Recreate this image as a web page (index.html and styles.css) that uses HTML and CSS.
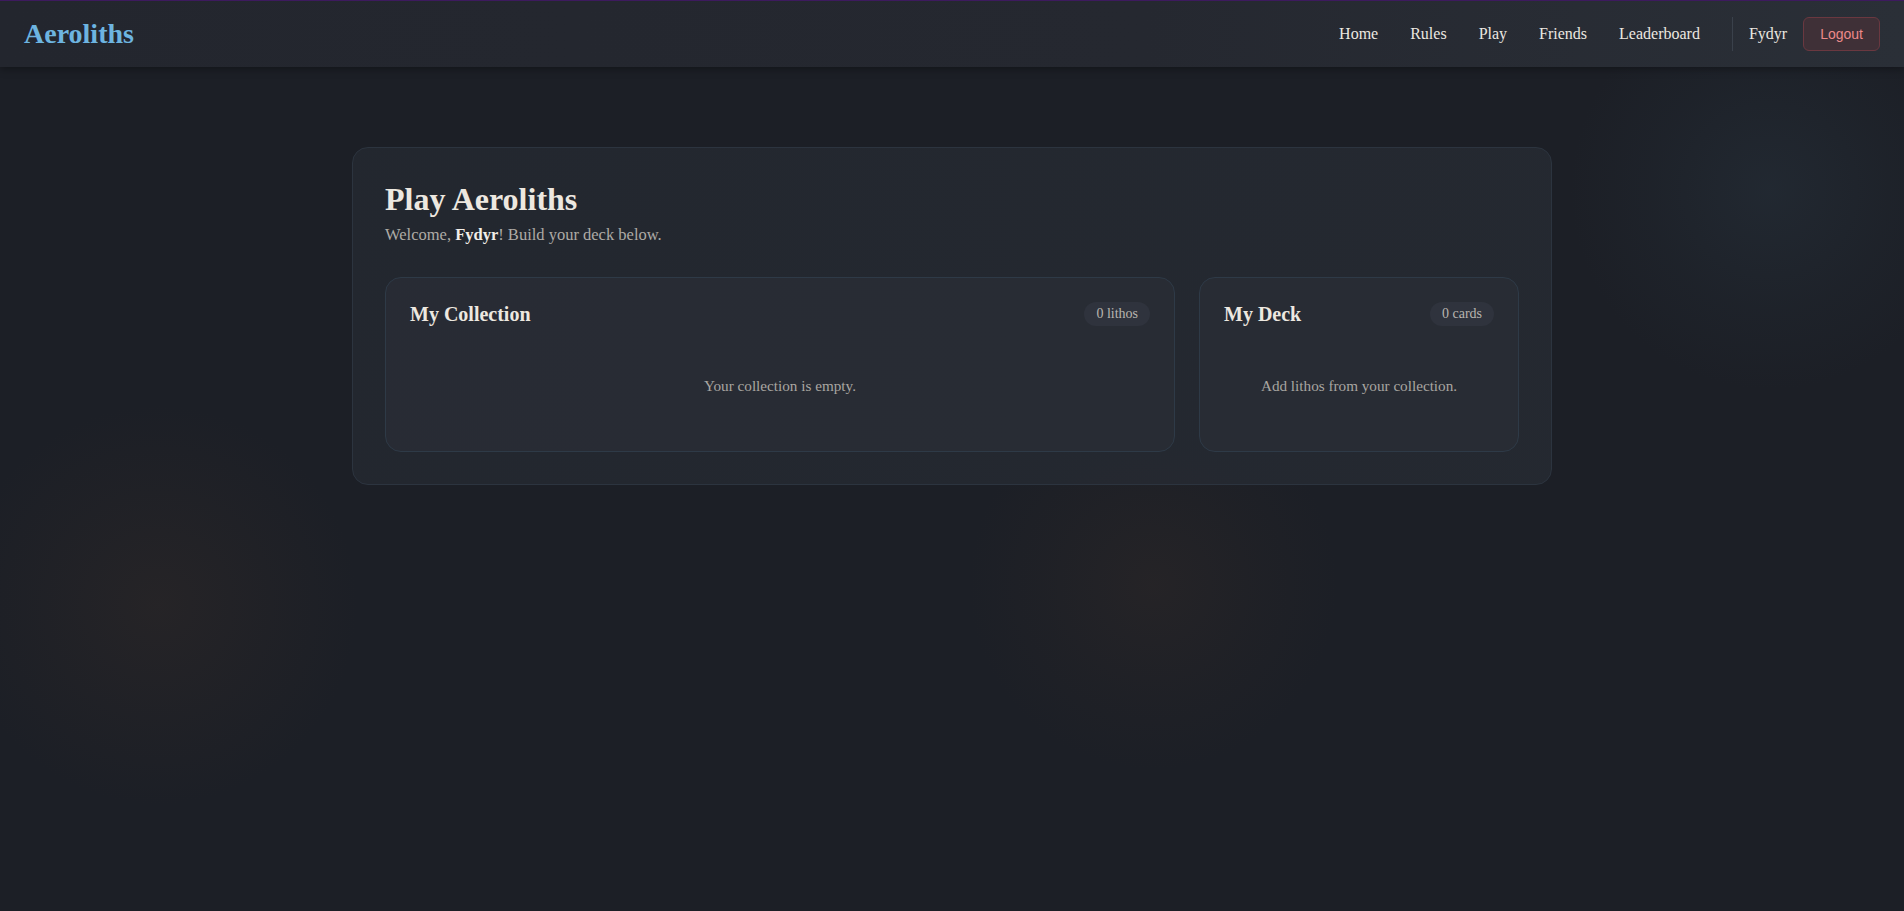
FILE: index.html
```html
<!DOCTYPE html>
<html lang="en">
<head>
  <meta charset="UTF-8" />
  <meta name="viewport" content="width=device-width, initial-scale=1.0"/>
  <title>Play – Aeroliths</title>
  <link rel="stylesheet" href="styles.css">
</head>
<body>

  <header>
    <div class="logo">Aeroliths</div>
    <nav>
      <ul>
        <li><a href="#">Home</a></li>
        <li><a href="#">Rules</a></li>
        <li><a href="#">Play</a></li>
        <li><a href="#">Friends</a></li>
        <li><a href="#">Leaderboard</a></li>
      </ul>
      <span class="nav-divider"></span>
      <span class="usuario">Fydyr</span>
      <button class="logout-btn">Logout</button>
    </nav>
  </header>

  <main>
    <section class="play-panel">
      <h1>Play Aeroliths</h1>
      <p class="welcome">Welcome, <strong>Fydyr</strong>! Build your deck below.</p>

      <div class="builder">
        <div class="card-box">
          <div class="card-box-head">
            <h2>My Collection</h2>
            <span class="badge">0 lithos</span>
          </div>
          <p class="empty">Your collection is empty.</p>
        </div>

        <div class="card-box">
          <div class="card-box-head">
            <h2>My Deck</h2>
            <span class="badge">0 cards</span>
          </div>
          <p class="empty">Add lithos from your collection.</p>
        </div>
      </div>
    </section>
  </main>

</body>
</html>
```

FILE: styles.css
```css
/* tema oscuro con brillos suaves de fondo */
html {
  min-height: 100%;
  background:
    radial-gradient(circle 200px at 158px 605px, rgba(58, 46, 40, 0.32), rgba(58, 46, 40, 0.12) 60%, transparent),
    radial-gradient(circle 185px at 1153px 585px, rgba(58, 46, 40, 0.3), rgba(58, 46, 40, 0.1) 60%, transparent),
    radial-gradient(circle 200px at 1770px 190px, rgba(44, 58, 70, 0.35), rgba(44, 58, 70, 0.12) 60%, transparent),
    #1c1f26;
}

body {
  font-family: "Liberation Serif", "Times New Roman", serif;
  margin: 0;
  padding: 0;
  color: #ece8e1;
}

header {
  background: linear-gradient(90deg, #23262e 0%, #252830 60%, #2a2f37 100%);
  border-top: 1px solid #3d1a5e;
  padding: 16px 24px;
  display: flex;
  justify-content: space-between;
  align-items: center;
  box-shadow: 0 2px 8px rgba(0, 0, 0, 0.35);
}

.logo {
  font-size: 28px;
  font-weight: bold;
  color: #6db4e0;
}

nav {
  display: flex;
  align-items: center;
  gap: 16px;
}

nav ul {
  list-style: none;
  display: flex;
  padding: 0;
  margin: 0;
}

nav a {
  display: block;
  padding: 8px 16px;
  color: #ece8e1;
  text-decoration: none;
  font-size: 16px;
}

.nav-divider {
  width: 1px;
  height: 34px;
  background: #3a414b;
}

.usuario {
  font-size: 16px;
  color: #ece8e1;
}

.logout-btn {
  font-family: "Liberation Sans", Arial, sans-serif;
  font-size: 14px;
  padding: 8px 16px;
  color: #ec8a8a;
  background: #3f3037;
  border: 1px solid #6a3840;
  border-radius: 6px;
  cursor: pointer;
}

main {
  padding: 80px 24px;
}

.play-panel {
  max-width: 1200px;
  margin: 0 auto;
  padding: 32px;
  box-sizing: border-box;
  border: 1px solid #2c343f;
  border-radius: 16px;
  background: linear-gradient(90deg, rgba(36, 40, 48, 0.85), rgba(38, 42, 50, 0.85));
}

h1 {
  margin: 0;
  font-size: 32px;
  line-height: 1.2;
  color: #ede8e0;
}

.welcome {
  margin: 7px 0 0;
  font-size: 16.5px;
  color: #aeaba6;
}

.welcome strong {
  color: #f2eee8;
}

.builder {
  display: grid;
  grid-template-columns: 1fr 320px;
  gap: 24px;
  margin-top: 32px;
}

.card-box {
  padding: 24px;
  border: 1px solid #2e3a47;
  border-radius: 16px;
  background: rgba(41, 45, 54, 0.8);
}

.card-box-head {
  display: flex;
  justify-content: space-between;
  align-items: center;
  margin-bottom: 19px;
}

h2 {
  margin: 0;
  font-size: 20px;
  color: #ede8e0;
}

.badge {
  font-size: 14px;
  padding: 4px 12px;
  border-radius: 999px;
  background: #2f333d;
  color: #b9b6b0;
}

.empty {
  margin: 0;
  padding: 32px 0;
  text-align: center;
  font-size: 15.2px;
  color: #a9a6a1;
}
```
